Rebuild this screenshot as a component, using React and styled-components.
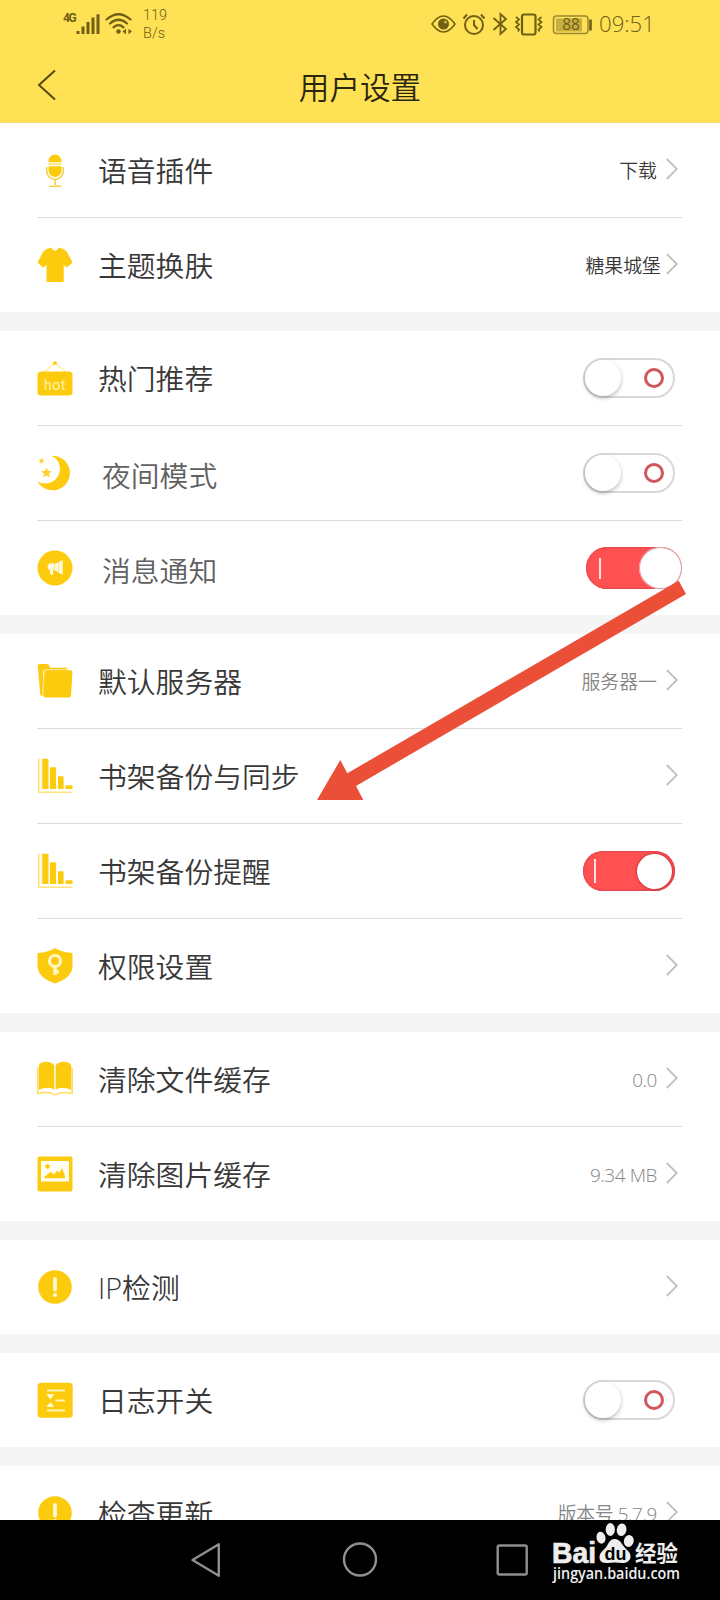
import React from 'react'
import styled, { createGlobalStyle } from 'styled-components'

const groups = [
    [
        { icon: 'mic', label: '语音插件', value: '下载', dark: true },
        { icon: 'shirt', label: '主题换肤', value: '糖果城堡', dark: true, tight: true },
    ],
    [
        { icon: 'hot', label: '热门推荐', toggle: 'off' },
        { icon: 'moon', label: '夜间模式', toggle: 'off', soft: true },
        { icon: 'horn', label: '消息通知', toggle: 'large', soft: true },
    ],
    [
        { icon: 'folder', label: '默认服务器', value: '服务器一' },
        { icon: 'chart', label: '书架备份与同步', value: '' },
        { icon: 'chart', label: '书架备份提醒', toggle: 'on' },
        { icon: 'shield', label: '权限设置', value: '' },
    ],
    [
        { icon: 'book', label: '清除文件缓存', value: '0.0', latin: true },
        { icon: 'image', label: '清除图片缓存', value: '9.34 MB', latin: true },
    ],
    [{ icon: 'alert', label: 'IP检测', value: '' }],
    [{ icon: 'log', label: '日志开关', toggle: 'off' }],
    [{ icon: 'alert', label: '检查更新', value: '版本号 5.7.9', latin: true }],
]

const icons = {
    mic: (
        <>
            <path d="M11.500 9a6.500 6.500 0 0 1 13 0v1.300h-13z" />
            <path d="M11.500 11.400h13v1.600h-13z" opacity=".6" />
            <path d="M11.500 14.200h13v4.300a6.500 6.500 0 0 1-13 0z" />
            <path d="M9.700 15v4a8.300 8.300 0 0 0 16.600 0v-4M18 27.500V33M12 34.200h12" fill="none" stroke="#f3d04a" strokeWidth="1.600" />
        </>
    ),
    shirt: <path d="M11 1.500 14 .6q4 6.500 8 0l3 .9q3.500 1 5 3.500L35.500 15.500 30 20.500 26.700 18V35H9.500V18L6 20.500.500 15.500 6 5q1.500-2.500 5-3.500z" />,
    hot: (
        <>
            <circle cx="18" cy="3.200" r="1.900" />
            <path d="M17 4 7 12M19 4l10 8" stroke="#ffdf70" fill="none" />
            <rect x=".5" y="11.500" width="35" height="24" rx="3.500" />
            <text x="18" y="29.500" textAnchor="middle" fontFamily="Roboto" fontSize="14" letterSpacing=".6" fontWeight="400" fill="#fff3b8">hot</text>
        </>
    ),
    moon: (
        <>
            <path d="M14 .8A17.300 17.300 0 1 1 .5 26.500Q4 29 9.500 28.500 22.500 26 23 13.500 22.500 4 14 .8z" />
            <path d="m9.500 12.500 1.500 3.300 3.700.4-2.700 2.500.8 3.600-3.300-1.800-3.300 1.800.8-3.600-2.700-2.500 3.700-.4z" opacity=".85" />
            <path d="m4.500 2.500.9 2 2.200.3-1.600 1.500.4 2.200-1.900-1.100-2 1.100.4-2.200L1.400 4.800l2.200-.3z" opacity=".8" />
        </>
    ),
    horn: (
        <>
            <circle cx="18" cy="18" r="17.500" />
            <path d="M14 13.200h3.500v7.300H16v4.300q-2.500.7-2.900-1.300v-3.300a3.600 3.600 0 0 1 .9-7z" fill="#fffbe0" />
            <path d="m18 13.700 3.200-1.200v9.800l-3.200-1.800zM21.700 12l4-2v14.800l-4-2z" fill="#fffbe0" />
        </>
    ),
    folder: (
        <>
            <path d="M.8 3Q.8 1 2.800 1h7.400q1.500 0 2 1.500l1 2.300H29q1.500 0 1.800 1.700H8.500q-2 0-2.200 2L5.500 33.500q-2-.3-2.300-2.300z" />
            <path d="M7 7h24l-1 25H5z" fill="#ffe47d" />
            <path d="M9.800 7.300h23.700q2 0 1.900 2L34 32.500q-.2 2-2 2H8.300q-2 0-1.900-2L7.800 9.200q.2-1.900 2-1.900z" />
        </>
    ),
    chart: (
        <>
            <path d="M1.700.500v33.700h34" fill="none" stroke="#ffe47d" strokeWidth="1.600" />
            <path d="M5.500 1v30" stroke="#ffe47d" strokeWidth="1.500" />
            <path d="M5.500 1.500Q5.500.8 6.300.8h4.200q1 0 1 1V31h-6zM12.900 10q0-.8.8-.8h4.600q.8 0 .8 1V31h-6.200zM21 19q0-.8.8-.8h4q.8 0 .8.800V31H21zM28.500 27.300h7V31h-7z" />
        </>
    ),
    shield: (
        <>
            <path d="M18 0Q25 4.700 35.500 5v14.500Q34 30 18 35.500 2 30 .5 19.500V5Q11 4.700 18 0z" />
            <circle cx="18" cy="13" r="5.500" fill="none" stroke="#fff6c5" strokeWidth="3.200" />
            <path d="M16.300 18h3.400v9h-3.400zM19.500 22h2.300v3.500h-2.300z" fill="#fff6c5" />
        </>
    ),
    book: (
        <>
            <path d="M1.700 5Q3 .8 9 .8q6 0 8.300 3.700v24.200Q14 26.300 9 27q-4 0-7.300 2zM34.300 5Q33 .8 27 .8q-6 0-8.300 3.700v24.200Q22 26.300 27 27q4 0 7.300 2z" />
            <path d="M.8 7v25.500q8-2 14.200 0 3 2.500 6 0 7-2 14.200 0V7" fill="none" stroke="#ffdc62" strokeWidth="1.500" />
        </>
    ),
    image: (
        <>
            <rect x=".5" y=".5" width="35" height="35" rx="2" />
            <path d="M4 5h28v20.500H4z" fill="#fffdf0" />
            <circle cx="10.500" cy="10.500" r="2.300" />
            <path d="M7.500 22.300v-1.500l6-5 3.500 2.700 3.300-4 2 2.500L25 12l3 8v2.300z" />
        </>
    ),
    alert: (
        <>
            <circle cx="18" cy="18" r="16.800" />
            <path d="M18 10v10.500" stroke="#fff9d6" strokeWidth="3.800" strokeLinecap="round" />
            <circle cx="18" cy="26" r="2" fill="#fff9d6" />
        </>
    ),
    log: (
        <>
            <rect x=".7" y=".7" width="35" height="35" rx="3.500" />
            <path d="M10 8.600h18M18.500 18.500H28M10 28.500h18" stroke="#fff4b3" strokeWidth="2" />
            <path d="M9.300 12h8l-4 5.500zM9.300 25h8l-4-5z" fill="#fff9d6" />
        </>
    ),
}

const RowIcon = ({ name }) => (
    <IconBox viewBox="0 0 36 36">{icons[name]}</IconBox>
)

const Switch = ({ mode }) => (
    <Track $mode={mode}>
        {mode === 'off' ? (
            <>
                <Knob $mode={mode} />
                <Ring />
            </>
        ) : (
            <>
                <Bar $mode={mode} />
                <Knob $mode={mode} />
            </>
        )}
    </Track>
)

const Row = ({ row }) => (
    <RowBox>
        <RowIcon name={row.icon} />
        <Label $soft={row.soft}>{row.label}</Label>
        {row.toggle ? (
            <Switch mode={row.toggle} />
        ) : (
            <>
                <Value $dark={row.dark} $tight={row.tight} $latin={row.latin}>{row.value}</Value>
                <Chevron viewBox="0 0 12 22"><path d="m.8 1 10 10-10 10" /></Chevron>
            </>
        )}
    </RowBox>
)

const Status = () => (
    <StatusBar>
        <Network>4G</Network>
        <Signal viewBox="0 0 24 22">
            <path d="M2 18v3M7 13.500V21M12 9v12M17 4.500V21M22 1.300V21" />
        </Signal>
        <Wifi viewBox="0 0 28 22">
            <path d="M1.500 6.500q12-10.500 24 0M5 10.500q8.500-7.500 17 0M8.500 14.300q5-4.300 10 0" fill="none" strokeWidth="2.200" strokeLinecap="round" />
            <circle cx="13.500" cy="18.500" r="2.200" stroke="none" />
            <path d="m17.500 18.500 3.500-2.800v5.600zM27 18.500l-3.500-2.800v5.600z" stroke="none" />
        </Wifi>
        <Speed>119<br />B/s</Speed>
        <StatusIcons viewBox="0 0 164 26">
            <g fill="none" strokeWidth="2">
                <path d="M1 13q11.500-16 23 0-11.500 16-23 0z" strokeWidth="1.500" />
                <circle cx="12.500" cy="13" r="5.500" fill="#705f14" stroke="none" />
                <circle cx="14.500" cy="11" r="1.500" fill="#cdb13b" stroke="none" />
                <circle cx="43" cy="14" r="9" />
                <path d="M43 9v5l3.500 4M32.500 7.500 36 3.500M53.500 7.500 50 3.500" />
                <path d="m62.500 7 12.500 11-5.500 5V3l5.500 5-12.500 11" strokeWidth="1.800" />
                <rect x="91" y="3.500" width="13.500" height="20" rx="2" strokeWidth="2.200" />
                <path d="m85 6 3 2.500-3 2.500 3 2.500-3 2.500 3 2.500-1 2M110.500 6l-3 2.500 3 2.500-3 2.500 3 2.500-3 2.500 1 2" strokeWidth="1.700" />
                <rect x="122.500" y="5" width="34.500" height="17.500" rx="3" stroke="#9c8734" strokeWidth="1.500" />
                <path d="M125 7.500h26v13h-26z" fill="#c8ae41" stroke="none" />
                <path d="M159.500 8.500v11" strokeWidth="2.600" />
            </g>
            <text x="140" y="19" textAnchor="middle" fontFamily="Open Sans" fontSize="15.500" fontWeight="400" stroke="none">88</text>
        </StatusIcons>
        <Clock>09:51</Clock>
    </StatusBar>
)

const BaiduMark = () => (
    <Mark viewBox="0 0 132 66">
        <g fill="#eee" fontFamily='"Liberation Sans", sans-serif' fontWeight="700">
            <text x="0" y="42.500" fontSize="29" textLength="44" lengthAdjust="spacingAndGlyphs" stroke="#eee" strokeWidth=".7">Bai</text>
            <ellipse cx="49" cy="17.700" rx="4.500" ry="6" transform="rotate(-12 49 17.700)" />
            <ellipse cx="58.300" cy="9.500" rx="4.600" ry="6.500" />
            <ellipse cx="69.600" cy="9.800" rx="4.800" ry="6.300" transform="rotate(10 69.600 9.800)" />
            <ellipse cx="76.800" cy="21" rx="4.900" ry="6" transform="rotate(14 76.800 21)" />
            <path d="M62.500 19q4.500 0 7.500 5 2 3 5 6 5 4 3 9-2.500 4.500-7.500 4-8-1-15 0-7 .5-8-4.500-.5-5 4-8.500 3-2.500 4.500-6 2.500-5 6.500-5z" />
            <text x="52.500" y="40" fontSize="18" fill="#000">du</text>
            <text x="83" y="40.700" fontSize="22" fontFamily='"Noto Sans CJK SC", sans-serif' textLength="43" lengthAdjust="spacingAndGlyphs">经验</text>
        </g>
        <text x="1" y="59.300" fill="#eee" fontFamily='"Open Sans", sans-serif' fontWeight="600" fontSize="15.500" textLength="127" lengthAdjust="spacingAndGlyphs">jingyan.baidu.com</text>
    </Mark>
)

export default function App() {
    return (
        <Screen>
            <GlobalStyle />
            <Header>
                <Status />
                <TitleBar>
                    <Back viewBox="0 0 20 32"><path d="M18 1.500 2 16l16 14.500" /></Back>
                    <Title>用户设置</Title>
                </TitleBar>
            </Header>
            <List>
                {groups.map((rows, i) => (
                    <Group key={i}>
                        {rows.map((row) => <Row key={row.label} row={row} />)}
                    </Group>
                ))}
            </List>
            <NavBar>
                <NavIcon viewBox="0 0 36 36"><path d="M2.500 18 28.800 2.300v31.400z" /></NavIcon>
                <NavIcon viewBox="0 0 36 36"><circle cx="18" cy="17.500" r="16" /></NavIcon>
                <NavIcon viewBox="0 0 36 36"><rect x="3.700" y="3.500" width="29" height="29" rx="1.500" /></NavIcon>
                <BaiduMark />
            </NavBar>
            <Pointer viewBox="0 0 370 220">
                <path d="M361.700.700 369 14 39 206l7.300 14H0l23.300-40 7 13.300z" />
            </Pointer>
        </Screen>
    )
}

const GlobalStyle = createGlobalStyle`
    *{
        box-sizing: border-box;
    }
    body{
        margin: 0;
        background: #fff;
        font-family: "Open Sans", "Noto Sans CJK SC", sans-serif;
        font-weight: 300;
    }
    svg{
        display: block;
        flex-shrink: 0;
    }
`;

const Screen = styled.div`
    position: relative;
    display: flex;
    flex-direction: column;
    width: 720px;
    height: 1600px;
    overflow: hidden;
`;

const Header = styled.header`
    height: 123px;
    background: #fee154;
    border-bottom: 1px solid #f3dd70;
`;

const StatusBar = styled.div`
    display: flex;
    height: 48px;
    padding: 0 67px 0 63px;
    color: #705f14;
    fill: #705f14;
    stroke: #705f14;
`;

const Network = styled.span`
    width: 13px;
    margin-top: 11px;
    font: 700 12px/14px Roboto, sans-serif;
    letter-spacing: -1.5px;
`;

const Signal = styled.svg`
    width: 24px;
    height: 22px;
    margin-top: 13px;
    stroke-width: 3;
`;

const Wifi = styled.svg`
    width: 28px;
    height: 22px;
    margin: 13px 0 0 5px;
`;

const Speed = styled.span`
    margin: 7px 0 0 10px;
    font: 300 14.5px/18px Roboto, sans-serif;
`;

const StatusIcons = styled.svg`
    width: 164px;
    height: 26px;
    margin: 11px 0 0 auto;
`;

const Clock = styled.time`
    width: 58px;
    padding-left: 4px;
    margin-top: 8px;
    font-size: 22.2px;
    line-height: 32px;
    white-space: nowrap;
`;

const TitleBar = styled.div`
    display: grid;
    grid-template-columns: 100px 1fr 100px;
    align-items: center;
    height: 74px;
`;

const Back = styled.svg`
    width: 20px;
    height: 32px;
    margin-left: 37px;
    fill: none;
    stroke: #57490d;
    stroke-width: 2;
`;

const Title = styled.h1`
    margin: 3px 0 0;
    text-align: center;
    font-size: 30.6px;
    font-weight: 350;
    line-height: 40px;
    color: #2b260f;
`;

const List = styled.main`
    display: flex;
    flex: 1;
    flex-direction: column;
    gap: 19px;
    min-height: 0;
    overflow: hidden;
    background: #f5f5f5;
`;

const Group = styled.section`
    flex-shrink: 0;
    padding: 0 38px 0 37px;
    background: #fff;
`;

const RowBox = styled.div`
    display: flex;
    align-items: center;
    height: 94px;
    &:not(:last-child){
        height: 95px;
        border-bottom: 1px solid #dcdcdc;
    }
`;

const IconBox = styled.svg`
    width: 36px;
    height: 36px;
    margin-bottom: 1px;
    fill: #fdcb0d;
`;

const Label = styled.span`
    flex: 1;
    margin-left: ${({ $soft }) => ($soft ? '29px' : '25px')};
    padding-top: ${({ $soft }) => ($soft ? '5px' : '2px')};
    font-size: 28.8px;
    font-weight: 350;
    line-height: 40px;
    color: ${({ $soft }) => ($soft ? '#606060' : '#383838')};
`;

const Value = styled.span`
    margin-right: ${({ $tight }) => ($tight ? '5px' : '9px')};
    padding-top: ${({ $latin }) => ($latin ? '1px' : '2px')};
    font-size: 18.9px;
    font-weight: 350;
    letter-spacing: ${({ $latin }) => ($latin ? '-.4px' : 'normal')};
    line-height: 28px;
    color: ${({ $dark }) => ($dark ? '#383838' : '#858585')};
`;

const Chevron = styled.svg`
    width: 12px;
    height: 22px;
    margin: 0 4px 2px 0;
    fill: none;
    stroke: #c0c0c0;
    stroke-width: 1.8;
`;

const Track = styled.span`
    display: flex;
    align-items: center;
    justify-content: space-between;
    width: ${({ $mode }) => ($mode === 'large' ? '96px' : '92px')};
    height: ${({ $mode }) => ($mode === 'large' ? '42px' : '40px')};
    margin-right: ${({ $mode }) => ($mode === 'large' ? '0' : '7px')};
    padding: ${({ $mode }) => ({ off: '0 9px 0 0', on: '0 3px 0 11px', large: '0 0 0 13px' })[$mode]};
    border: ${({ $mode }) => ($mode === 'off' ? '2px solid #d8d8d8' : 'none')};
    border-radius: 21px;
    background: ${({ $mode }) => ($mode === 'off' ? '#fff' : '#ff5052')};
    box-shadow: ${({ $mode }) => ($mode === 'off' ? 'none' : 'inset 0 0 1px 1px #e4494d')};
`;

const Knob = styled.span`
    width: ${({ $mode }) => ({ off: '36px', on: '35px', large: '43px' })[$mode]};
    height: ${({ $mode }) => ({ off: '36px', on: '35px', large: '42px' })[$mode]};
    border-radius: 50%;
    background: #fff;
    box-shadow: ${({ $mode }) => ({
        off: '0 2px 4px rgba(0, 0, 0, .26)',
        on: '0 0 3px rgba(90, 0, 10, .6)',
        large: 'inset 0 0 0 1px #dc9a9a',
    })[$mode]};
`;

const Ring = styled.span`
    width: 20px;
    height: 20px;
    border: 3.5px solid #d0565c;
    border-radius: 50%;
`;

const Bar = styled.span`
    width: 2px;
    height: ${({ $mode }) => ($mode === 'large' ? '21px' : '24px')};
    background: #ffe4e4;
`;

const NavBar = styled.nav`
    position: relative;
    display: flex;
    justify-content: center;
    gap: 116px;
    height: 80px;
    padding-top: 22px;
    background: #000;
`;

const NavIcon = styled.svg`
    width: 36px;
    height: 36px;
    fill: none;
    stroke: #8f8f8f;
    stroke-width: 2.4;
    stroke-linejoin: round;
`;

// The logo and the pointer lie on top of the screen
const Mark = styled.svg`
    position: absolute;
    top: 0;
    left: 552px;
    width: 132px;
    height: 66px;
`;

const Pointer = styled.svg`
    position: absolute;
    top: 580px;
    left: 317px;
    width: 370px;
    height: 220px;
    fill: #ec4f38;
`;
